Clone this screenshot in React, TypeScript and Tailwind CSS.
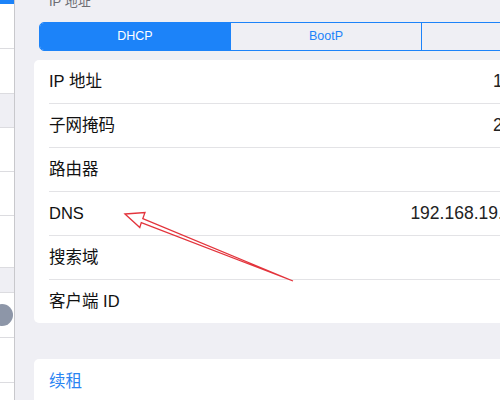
import React from 'react';

const font = { fontFamily: '"Liberation Sans", "Noto Sans CJK SC", sans-serif' };

const rows: { label: string; value?: string }[] = [
  { label: 'IP 地址', value: '192.168.19.15' },
  { label: '子网掩码', value: '255.255.255.0' },
  { label: '路由器' },
  { label: 'DNS', value: '192.168.19.1, 223.5.5.50' },
  { label: '搜索域' },
  { label: '客户端 ID' },
];

const Sidebar = () => (
  <div className="w-[15px] shrink-0 bg-white border-r border-[#c8c8cc] flex flex-col">
    <div className="h-[4px] bg-[#1c83f9]" />
    <div className="h-[45px] border-b border-[#dcdce0]" />
    <div className="h-[45px] border-b border-[#dcdce0]" />
    <div className="h-[34px] bg-[#efeff4] border-b border-[#dcdce0]" />
    <div className="h-[44px] border-b border-[#dcdce0]" />
    <div className="h-[44px] border-b border-[#dcdce0]" />
    <div className="h-[52px] border-b border-[#dcdce0]" />
    <div className="h-[25px] bg-[#efeff4] border-b border-[#dcdce0]" />
    <div className="h-[45px] border-b border-[#dcdce0] flex items-center overflow-hidden">
      <div className="w-[22px] h-[22px] shrink-0 rounded-full bg-[#8d96a8] -ml-[9px]" />
    </div>
    <div className="h-[45px] border-b border-[#dcdce0]" />
  </div>
);

const Segmented = () => (
  <div className="ml-[24px] flex h-[29px] w-[600px] shrink-0 border border-[#1c83f9] rounded-[5px] overflow-hidden text-[12.5px]">
    <div className="w-[190px] shrink-0 bg-[#1c83f9] text-white flex items-center justify-center">DHCP</div>
    <div className="w-[191px] shrink-0 border-l border-[#1c83f9] text-[#1c83f9] flex items-center justify-center">BootP</div>
    <div className="w-[191px] shrink-0 border-l border-[#1c83f9] text-[#1c83f9] flex items-center justify-center">手动</div>
  </div>
);

const Arrow = () => (
  <svg className="absolute inset-0 pointer-events-none" width="500" height="400" viewBox="0 0 500 400">
    <polygon
      points="125,214 145,212.5 142.8,218.6 293,281 141.3,222.6 139.8,227.5"
      fill="none"
      stroke="#e3343c"
      strokeWidth="1.3"
      strokeLinejoin="miter"
    />
  </svg>
);

export default function App() {
  return (
    <div className="relative w-[500px] h-[400px] overflow-hidden flex bg-[#efeff4] text-[#111]" style={font}>
      <Sidebar />
      <div className="flex-1 min-w-0 overflow-hidden flex flex-col">
        {/* section header, mostly scrolled off the top */}
        <div className="h-[22px] shrink-0 flex flex-col">
          <div className="-mt-[6px] pl-[34px] text-[13px] leading-[16px] text-[#6d6d72]">IP 地址</div>
        </div>
        <Segmented />
        <div className="mt-[9px] ml-[19px] w-[580px] shrink-0 bg-white rounded-[5px]">
          {rows.map((r, i) => (
            <div key={r.label} className={`pl-[15px] ${i === rows.length - 1 ? 'h-[43px]' : 'h-[44px]'}`}>
              <div
                className={`h-full flex items-center pr-[9px] text-[16.5px] ${
                  i === rows.length - 1 ? '' : 'border-b border-[#e3e3e6]'
                }`}
              >
                <span>{r.label}</span>
                {r.value && <span className="ml-auto text-[17.5px] text-[#222] whitespace-nowrap">{r.value}</span>}
              </div>
            </div>
          ))}
        </div>
        <div className="mt-[36px] ml-[19px] w-[580px] h-[60px] shrink-0 bg-white rounded-[5px] pl-[15px] pt-[12px]">
          <div className="text-[16.5px] leading-[20px] text-[#2a84f2]">续租</div>
        </div>
      </div>
      <Arrow />
    </div>
  );
}
